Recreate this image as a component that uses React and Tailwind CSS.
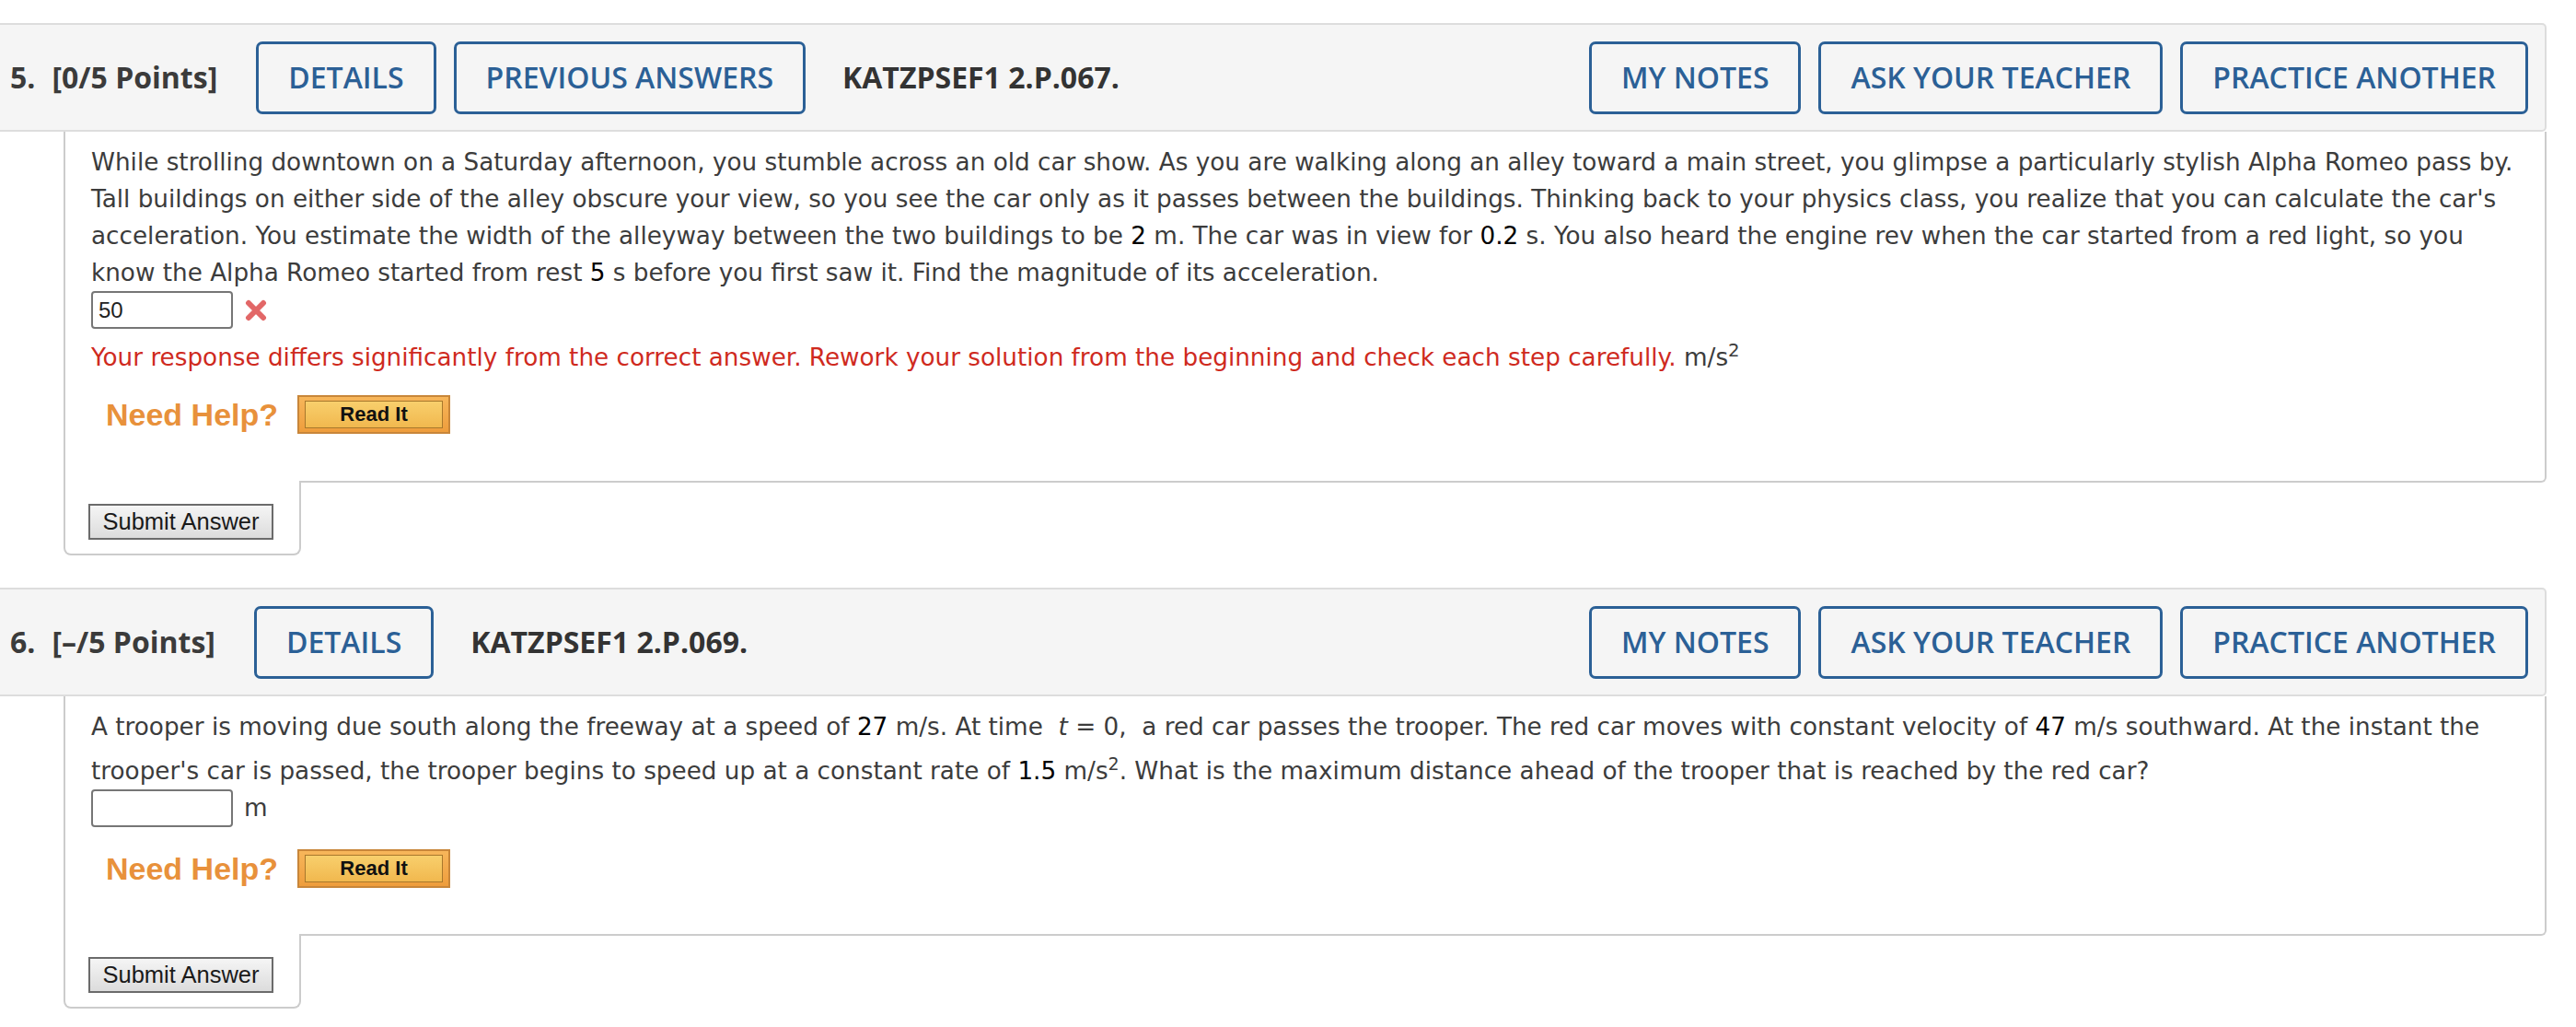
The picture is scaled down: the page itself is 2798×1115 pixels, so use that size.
import React from 'react';

const headerFont = { fontFamily: '"Open Sans", "Liberation Sans", sans-serif' };

const HeaderButton = ({ label }) => (
  <button
    type="button"
    className="h-[79px] px-[32px] border-[3px] border-[#2b6096] rounded-[7px] text-[32px] font-semibold text-[#2b6096] whitespace-nowrap bg-transparent"
  >
    {label}
  </button>
);

const QuestionHeader = ({ num, points, buttons, code }) => (
  <div
    className="flex items-center h-[118px] border-y-2 border-r-2 border-[#dddddd] rounded-r-[5px] bg-[#f5f5f5] pl-[11px] pr-[18px]"
    style={headerFont}
  >
    <div className="flex items-center text-[32px] font-bold text-[#3b3b3b] whitespace-nowrap">
      <span>{num}.</span>
      <span className="ml-[18px]">[{points} Points]</span>
    </div>
    <div className="flex items-center gap-[19px] ml-[42px]">
      {buttons.map((b) => (
        <HeaderButton key={b} label={b} />
      ))}
    </div>
    <div className="ml-[40px] text-[32px] font-bold text-[#333333] whitespace-nowrap">{code}</div>
    <div className="flex-1" />
    <div className="flex items-center gap-[19px]">
      <HeaderButton label="MY NOTES" />
      <HeaderButton label="ASK YOUR TEACHER" />
      <HeaderButton label="PRACTICE ANOTHER" />
    </div>
  </div>
);

const Num = ({ children }) => <span className="text-black">{children}</span>;

const WrongMark = () => (
  <svg width="26" height="24" viewBox="0 0 26 24" className="ml-[12px]">
    <path d="M5 4 L21 20 M21 4 L5 20" stroke="#e26767" strokeWidth="6" strokeLinecap="round" />
  </svg>
);

const NeedHelp = ({ mt }) => (
  <div className={`flex items-center ${mt}`}>
    <span
      className="ml-[16px] text-[34px] font-bold text-[#e8913b] leading-none"
      style={{ fontFamily: '"Liberation Sans", Arial, sans-serif' }}
    >
      Need Help?
    </span>
    <div className="ml-[21px] w-[166px] h-[42px] border-2 border-[#c8863a] bg-gradient-to-b from-[#f7b65a] to-[#ee9d3c] px-[6px] py-[4px]">
      <div
        className="w-full h-full border border-[#a8782c] bg-gradient-to-b from-[#f8cf6c] to-[#f1b84e] flex items-center justify-center text-[22px] font-bold text-[#111] leading-none"
        style={{ fontFamily: '"Liberation Sans", Arial, sans-serif' }}
      >
        Read It
      </div>
    </div>
  </div>
);

const AnswerInput = ({ value }) => (
  <div
    className="w-[154px] h-[41px] border-2 border-[#767676] rounded-[4px] bg-white flex items-center pl-[6px] text-[24px] text-[#222]"
    style={{ fontFamily: '"Liberation Sans", Arial, sans-serif' }}
  >
    {value}
  </div>
);

const SubmitTab = () => (
  <div className="relative -mt-[2px] ml-[69px] w-[258px] h-[81px] border-l-2 border-r-2 border-b-2 border-[#cccccc] rounded-b-[8px] bg-white pl-[25px] pt-[25px]">
    <button
      type="button"
      className="w-[201px] h-[39px] border-2 border-[#6b6b6b] bg-gradient-to-b from-[#f5f5f5] to-[#dcdcdc] text-[25.5px] text-[#1a1a1a] leading-none"
      style={{ fontFamily: '"Liberation Sans", Arial, sans-serif' }}
    >
      Submit Answer
    </button>
  </div>
);

const bodyFont = { fontFamily: '"DejaVu Sans", Verdana, sans-serif' };

export default function App() {
  return (
    <div className="w-[2766px] pt-[25px] pb-[18px] bg-white">
      {/* question 5 */}
      <QuestionHeader num="5" points="0/5" buttons={['DETAILS', 'PREVIOUS ANSWERS']} code="KATZPSEF1 2.P.067." />
      <div
        className="ml-[69px] border-l-2 border-r-2 border-b-2 border-[#cccccc] rounded-br-[6px] pl-[28px] pt-[13px] pb-[51px] text-[26.25px] text-[#3c3c3c]"
        style={bodyFont}
      >
        <p className="leading-[40px] whitespace-nowrap">
          While strolling downtown on a Saturday afternoon, you stumble across an old car show. As you are walking along an alley toward a main street, you glimpse a particularly stylish Alpha Romeo pass by.
          <br />
          Tall buildings on either side of the alley obscure your view, so you see the car only as it passes between the buildings. Thinking back to your physics class, you realize that you can calculate the car's
          <br />
          acceleration. You estimate the width of the alleyway between the two buildings to be <Num>2</Num> m. The car was in view for <Num>0.2</Num> s. You also heard the engine rev when the car started from a red light, so you
          <br />
          know the Alpha Romeo started from rest <Num>5</Num> s before you first saw it. Find the magnitude of its acceleration.
        </p>
        <div className="flex items-center h-[41px]">
          <AnswerInput value="50" />
          <WrongMark />
        </div>
        <p className="mt-[11px] leading-[40px] whitespace-nowrap">
          <span className="text-[#cf2a1e]">
            Your response differs significantly from the correct answer. Rework your solution from the beginning and check each step carefully.
          </span>{' '}
          m/s<sup>2</sup>
        </p>
        <NeedHelp mt="mt-[21px]" />
      </div>
      <SubmitTab />

      {/* question 6 */}
      <div className="mt-[35px]">
        <QuestionHeader num="6" points="–/5" buttons={['DETAILS']} code="KATZPSEF1 2.P.069." />
        <div
          className="ml-[69px] border-l-2 border-r-2 border-b-2 border-[#cccccc] rounded-br-[6px] pl-[28px] pt-[13px] pb-[50px] text-[26.25px] text-[#3c3c3c]"
          style={bodyFont}
        >
          <p className="leading-[40px] whitespace-nowrap">
            A trooper is moving due south along the freeway at a speed of <Num>27</Num> m/s. At time&nbsp;&nbsp;<i>t</i> = 0,&nbsp;&nbsp;a red car passes the trooper. The red car moves with constant velocity of <Num>47</Num> m/s southward. At the instant the
            <br />
            trooper's car is passed, the trooper begins to speed up at a constant rate of <Num>1.5</Num> m/s<span className="align-super text-[19px]">2</span>. What is the maximum distance ahead of the trooper that is reached by the red car?
          </p>
          <div className="flex items-center h-[41px]">
            <AnswerInput value="" />
            <span className="ml-[12px]">m</span>
          </div>
          <NeedHelp mt="mt-[24px]" />
        </div>
        <SubmitTab />
      </div>
    </div>
  );
}
